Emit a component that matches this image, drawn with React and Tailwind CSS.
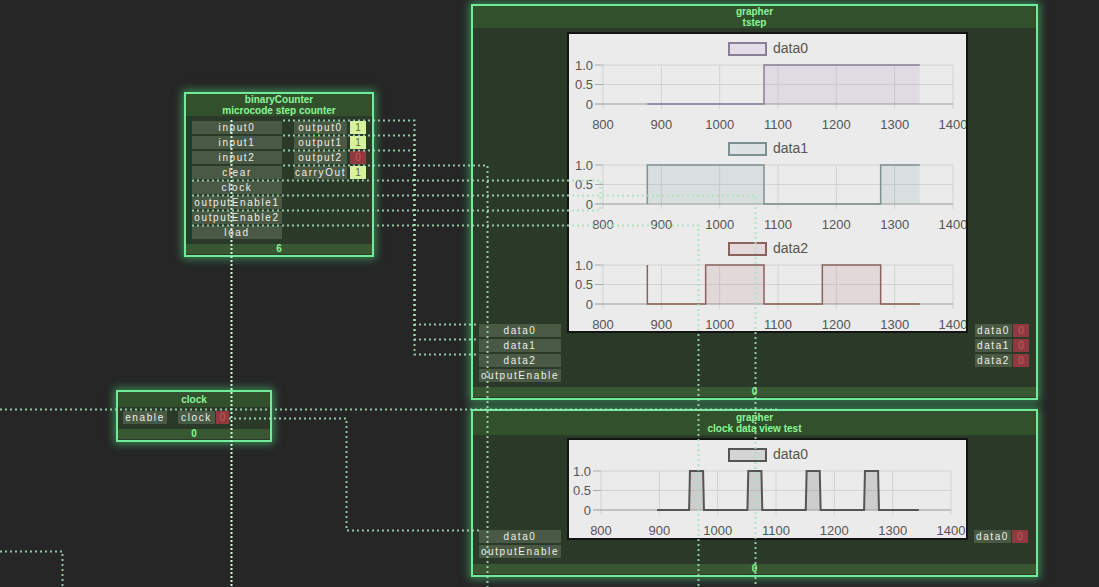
import React from "react";

const X0 = 34;
const sx = (v, x0 = X0) => x0 + ((v - 800) * 350) / 600;

const Label = ({ children, className = "" }) => (
  <div className={`h-[13px] bg-[#4a5944] text-[#eef0ea] text-[10px] leading-[13px] tracking-[1.6px] text-center whitespace-nowrap overflow-hidden ${className}`}>
    {children}
  </div>
);

const Value = ({ v, className = "w-[16px]" }) => (
  <div
    className={`h-[13px] text-[10px] leading-[13px] text-center ${className} ${
      v === 1 ? "bg-[#d6f29c] text-[#5b6a3a]" : "bg-[#8f3a40] text-[#c35a5e]"
    }`}
  >
    {v}
  </div>
);

const Node = ({ className, header, title, footer, children }) => (
  <div
    className={`absolute flex flex-col border-2 border-[#70eb9a] bg-[#2b3929] shadow-[0_0_8px_2px_rgba(80,225,130,0.5)] ${className}`}
  >
    <div className={`bg-[#33502c] text-center font-bold text-[10px] leading-[11px] text-[#88f795] flex flex-col justify-center ${header}`}>
      {title.map((t) => (
        <div key={t}>{t}</div>
      ))}
    </div>
    <div className="flex-1 flex">{children}</div>
    <div className="h-[10px] mb-[1px] bg-[#3a5733] text-center font-bold text-[10px] leading-[10px] text-[#88f795]">
      {footer}
    </div>
  </div>
);

// one step series -> stroke path and filled area
const Series = ({ pts, top, zero, stroke, fill, width = 1.5, x0 }) => {
  const p = pts.map(([v, on]) => `${sx(v, x0)},${on ? top : zero}`);
  const line = "M" + p.join(" L");
  const first = sx(pts[0][0], x0);
  const last = sx(pts[pts.length - 1][0], x0);
  const area = `M${first},${zero} L${p.join(" L")} L${last},${zero} Z`;
  return (
    <g>
      <path d={area} fill={fill} />
      <path d={line} fill="none" stroke={stroke} strokeWidth={width} />
    </g>
  );
};

const SubChart = ({ oy, name, stroke, fill, legendFill, pts, width, x0 = X0 }) => {
  const top = oy + 33;
  const zero = oy + 72;
  const mid = (top + zero) / 2;
  const ticks = [800, 900, 1000, 1100, 1200, 1300, 1400];
  return (
    <g>
      {ticks.map((t) => (
        <line key={t} x1={sx(t, x0)} x2={sx(t, x0)} y1={top} y2={zero + 5} stroke="#d2d2d2" strokeWidth="1" />
      ))}
      {[top, mid].map((y) => (
        <line key={y} x1={x0} x2={sx(1400, x0)} y1={y} y2={y} stroke="#d2d2d2" strokeWidth="1" />
      ))}
      <line x1={x0 - 8} x2={sx(1400, x0)} y1={zero} y2={zero} stroke="#9a9a9a" strokeWidth="1" />
      <line x1={x0 - 8} x2={x0} y1={top} y2={top} stroke="#aaa" strokeWidth="1" />
      <line x1={x0 - 8} x2={x0} y1={mid} y2={mid} stroke="#aaa" strokeWidth="1" />
      <text x={x0 - 10} y={top + 4.5} textAnchor="end" fontSize="13" fill="#555">1.0</text>
      <text x={x0 - 10} y={mid + 4.5} textAnchor="end" fontSize="13" fill="#555">0.5</text>
      <text x={x0 - 10} y={zero + 4.5} textAnchor="end" fontSize="13" fill="#555">0</text>
      {ticks.map((t) => (
        <text key={t} x={sx(t, x0)} y={oy + 97} textAnchor="middle" fontSize="13" fill="#555">
          {t}
        </text>
      ))}
      <rect x={160} y={oy + 11} width={37} height={12} fill={legendFill} stroke={stroke} strokeWidth="2" />
      <text x={204} y={oy + 21} fontSize="14" fill="#555">{name}</text>
      <Series pts={pts} top={top} zero={zero} stroke={stroke} fill={fill} width={width} x0={x0} />
    </g>
  );
};

const tstep = {
  data0: [[876, 0], [1076, 0], [1076, 1], [1343, 1]],
  data1: [[876, 0], [876, 1], [1076, 1], [1076, 0], [1276, 0], [1276, 1], [1343, 1]],
  data2: [[876, 1], [876, 0], [976, 0], [976, 1], [1076, 1], [1076, 0], [1176, 0], [1176, 1], [1276, 1], [1276, 0], [1343, 0]],
};

const clockPts = [[896, 0]];
[951, 1051, 1151, 1251].forEach((s) => {
  clockPts.push([s, 0], [s + 1.5, 1], [s + 24, 1], [s + 25.5, 0]);
});
clockPts.push([1345, 0]);

const wires = [
  "M283,120.5 H414.5 V324.5 H479",
  "M283,135.5 H414.5 V339.5 H479",
  "M283,150.5 H414.5 V354.5 H479",
  "M283,165.5 H487.5 V587",
  "M192,180.5 H600.5 V210",
  "M192,195.5 H755.5 V587",
  "M192,210.5 H600",
  "M192,225.5 H698.5 V587",
  "M0,409.5 H780",
  "M229,418.5 H346.5 V530.5 H479",
  "M0,551.5 H62.5 V587",
];

export default function App() {
  return (
    <div className="relative w-[1099px] h-[587px] bg-[#262626] overflow-hidden font-['Liberation_Sans',Arial,sans-serif]">
      {/* binary counter */}
      <Node
        className="left-[184px] top-[92px] w-[190px] h-[165px]"
        header="h-[22px]"
        title={["binaryCounter", "microcode step counter"]}
        footer="6"
      >
        <div className="flex flex-col gap-[2px] pt-[5px] pl-[6px] w-[96px]">
          {["input0", "input1", "input2", "clear", "clock", "outputEnable1", "outputEnable2", "load"].map((n) => (
            <Label key={n} className="w-[90px]">{n}</Label>
          ))}
        </div>
        <div className="flex flex-col gap-[2px] pt-[5px] ml-[12px]">
          {[["output0", 1], ["output1", 1], ["output2", 0], ["carryOut", 1]].map(([n, v]) => (
            <div key={n} className="flex gap-[3px]">
              <Label className="w-[53px] tracking-[1.4px]">{n}</Label>
              <Value v={v} />
            </div>
          ))}
        </div>
      </Node>

      {/* clock */}
      <Node
        className="left-[116px] top-[390px] w-[156px] h-[52px]"
        header="h-[15px]"
        title={["clock"]}
        footer="0"
      >
        <div className="flex pt-[4px] pl-[5px]">
          <Label className="w-[44px]">enable</Label>
          <div className="flex ml-[11px] gap-[1px]">
            <Label className="w-[37px]">clock</Label>
            <Value v={0} className="w-[13px]" />
          </div>
        </div>
      </Node>

      {/* grapher tstep */}
      <Node
        className="left-[471px] top-[4px] w-[567px] h-[396px]"
        header="h-[22px]"
        title={["grapher", "tstep"]}
        footer="0"
      >
        <div className="flex flex-col gap-[2px] pt-[296px] pl-[6px]">
          {["data0", "data1", "data2", "outputEnable"].map((n) => (
            <Label key={n} className="w-[82px]">{n}</Label>
          ))}
        </div>
        <div className="ml-[6px] mt-[4px] w-[401px] h-[301px] bg-[#ebebeb] border-2 border-[#141414]">
          <svg width="397" height="297" className="block font-['Liberation_Sans',Arial,sans-serif]">
            <SubChart oy={-2} name="data0" stroke="#8a7f97" fill="rgba(170,150,190,0.18)" legendFill="#e2dde6" pts={tstep.data0} />
            <SubChart oy={98} name="data1" stroke="#7d9190" fill="rgba(140,165,165,0.18)" legendFill="#dde3e2" pts={tstep.data1} />
            <SubChart oy={198} name="data2" stroke="#8b625d" fill="rgba(175,125,125,0.16)" legendFill="#e4dadb" pts={tstep.data2} />
          </svg>
        </div>
        <div className="flex flex-col gap-[2px] pt-[296px] ml-[7px]">
          {["data0", "data1", "data2"].map((n) => (
            <div key={n} className="flex gap-[1px]">
              <Label className="w-[37px]">{n}</Label>
              <Value v={0} />
            </div>
          ))}
        </div>
      </Node>

      {/* grapher clock */}
      <Node
        className="left-[471px] top-[409px] w-[567px] h-[168px]"
        header="h-[24px]"
        title={["grapher", "clock data view test"]}
        footer="0"
      >
        <div className="flex flex-col gap-[2px] pt-[95px] pl-[6px]">
          {["data0", "outputEnable"].map((n) => (
            <Label key={n} className="w-[82px]">{n}</Label>
          ))}
        </div>
        <div className="ml-[6px] mt-[3px] w-[401px] h-[102px] bg-[#ebebeb] border-2 border-[#141414]">
          <svg width="397" height="98" className="block font-['Liberation_Sans',Arial,sans-serif]">
            <SubChart oy={-2} name="data0" stroke="#555555" fill="rgba(150,150,150,0.35)" legendFill="#d4d4d4" pts={clockPts} width={2} x0={32} />
          </svg>
        </div>
        <div className="flex flex-col pt-[95px] ml-[6px]">
          <div className="flex gap-[1px]">
            <Label className="w-[37px]">data0</Label>
            <Value v={0} />
          </div>
        </div>
      </Node>

      {/* wires */}
      <svg className="absolute inset-0 pointer-events-none" width="1099" height="587">
        {wires.map((d) => (
          <path key={d} d={d} fill="none" stroke="#a6e3bd" strokeOpacity="0.85" strokeWidth="2" strokeDasharray="2 3" />
        ))}
        <path d="M231.5,120 V587" fill="none" stroke="#c8f7d8" strokeWidth="2" strokeDasharray="2 2" />
      </svg>
    </div>
  );
}
